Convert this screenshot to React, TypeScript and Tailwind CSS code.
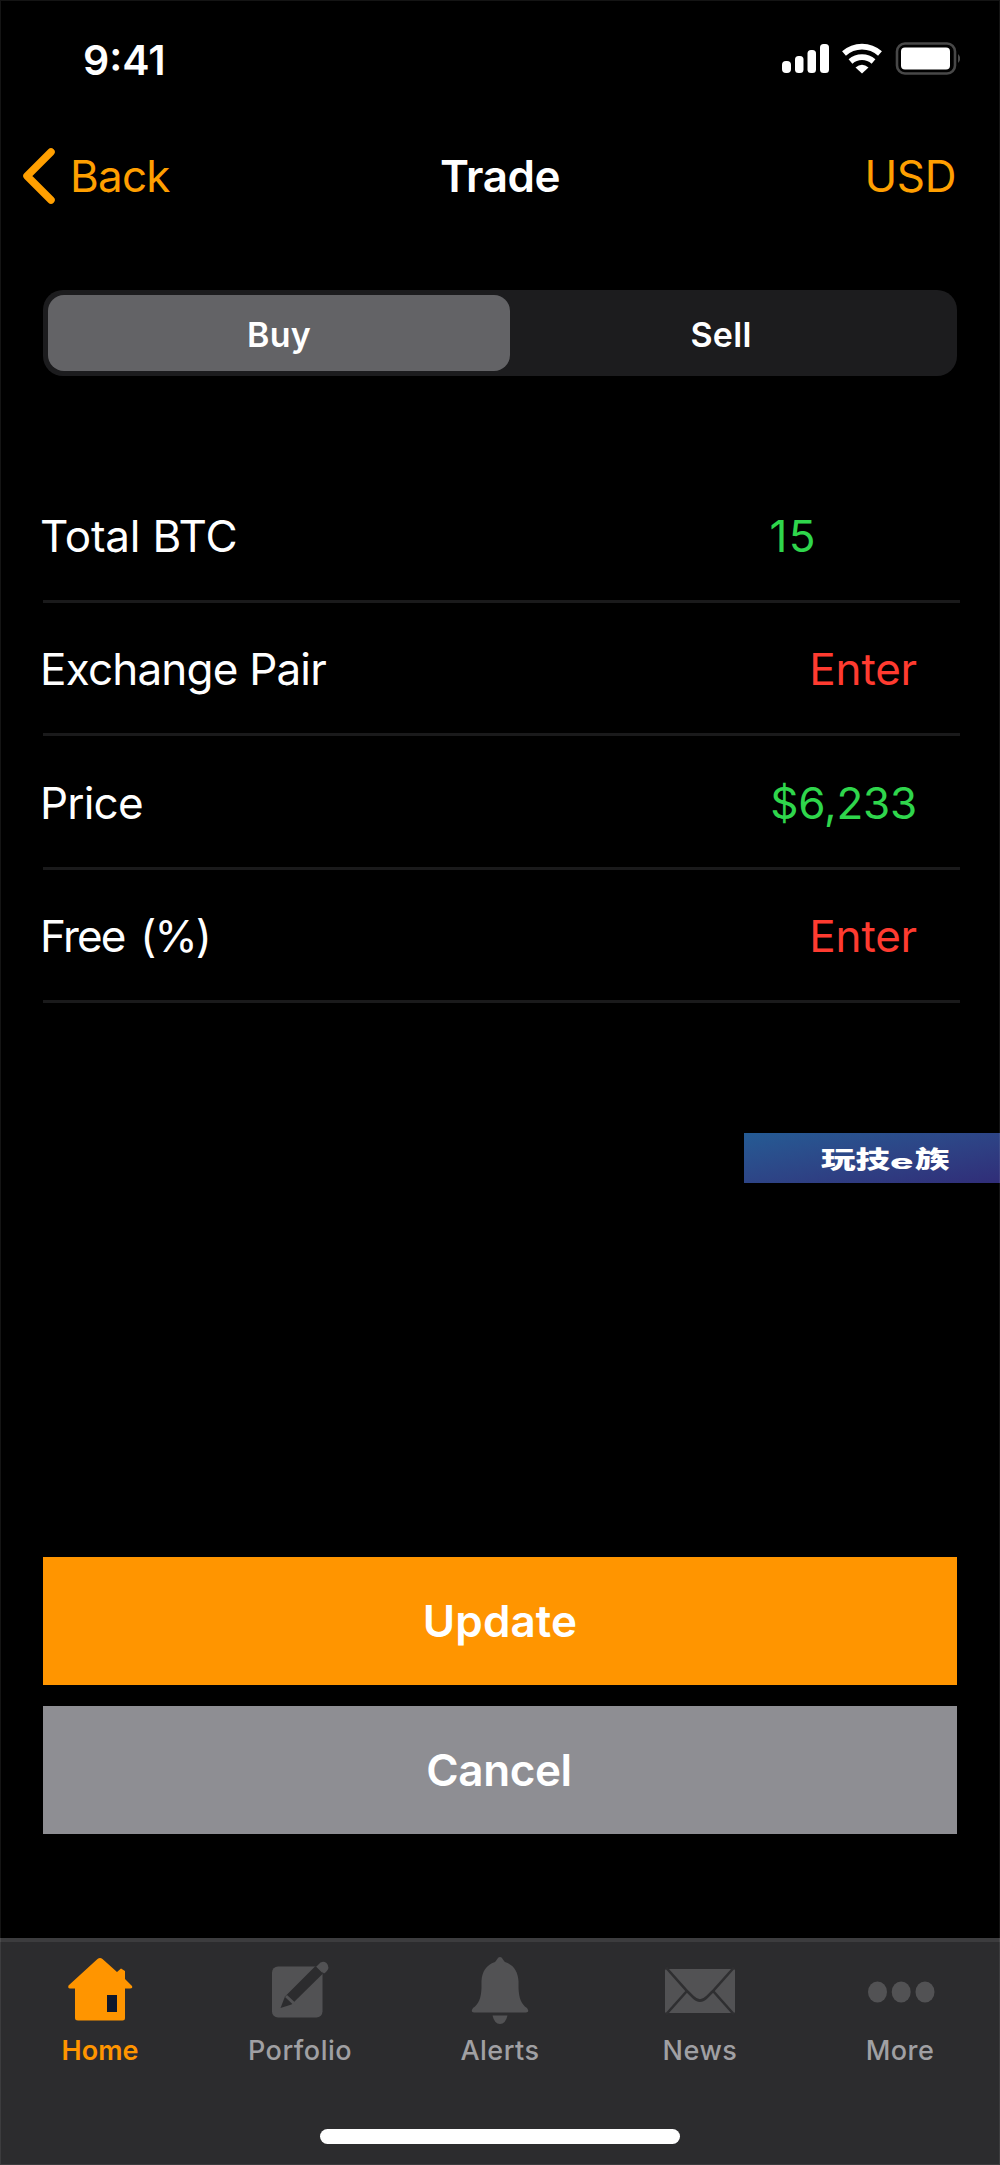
import { useState } from "react";

const rows = [
  { label: "Total BTC", value: "15", labelClass: "tracking-[-0.2px]", valueClass: "text-[#2fd64c] pr-[100px] tracking-[1.4px]" },
  { label: "Exchange Pair", value: "Enter", labelClass: "tracking-[-0.8px]", valueClass: "text-[#ff3b30] tracking-[-0.2px]" },
  { label: "Price", value: "$6,233", labelClass: "tracking-[-0.8px]", valueClass: "text-[#2fd64c] tracking-[-0.2px]" },
  { label: "Free (%)", value: "Enter", labelClass: "tracking-[-1.8px] [word-spacing:5px]", valueClass: "text-[#ff3b30] tracking-[-0.2px]" },
];

function StatusIcons() {
  return (
    <svg width="180" height="36" viewBox="780 41 180 36" fill="white">
      <rect x="782" y="61" width="9" height="12" rx="4" />
      <rect x="795" y="56" width="8.5" height="17" rx="3.5" />
      <rect x="807.5" y="50" width="8.5" height="23" rx="3.5" />
      <rect x="820" y="44" width="9" height="29" rx="3.5" />
      <path d="M844 53.5A27 27 0 0 1 880 53.5" fill="none" stroke="white" strokeWidth="5.8" />
      <path d="M850.5 61.5A17.5 17.5 0 0 1 873.5 61.5" fill="none" stroke="white" strokeWidth="5.8" />
      <path d="M855.5 67.5Q862 62 868.5 67.5L862 73.5Z" />
      <rect x="897" y="43.5" width="58" height="30" rx="8" fill="none" stroke="#484848" strokeWidth="2.6" />
      <rect x="901" y="47.5" width="49" height="22" rx="4" />
      <path d="M958 54Q962.5 58.5 958 63Z" fill="#4a4a4a" />
    </svg>
  );
}

function HomeIcon() {
  return (
    <svg width="80" height="72" viewBox="60 1954 80 72">
      <path
        d="M68.5 1985.5L97.5 1959Q100 1957 102.5 1959L117 1972L121 1968.5L125 1971V1979L132 1986Q133 1988.5 130 1988.5H125V2018Q125 2020.5 122.5 2020.5H78Q75 2020.5 75 2018V1988.5H70Q67.5 1988.5 68.5 1985.5Z"
        fill="#ff9500"
      />
      <rect x="107" y="1995" width="10" height="17" fill="#10182c" />
    </svg>
  );
}

function PortfolioIcon() {
  return (
    <svg width="80" height="72" viewBox="260 1954 80 72">
      <rect x="272" y="1966.5" width="50.5" height="51" rx="6" fill="#525254" />
      <path d="M280.5 2008L285 1996.5L315.5 1966L323 1973.5L291.5 2004.5Z" fill="#2c2c2e" />
      <path d="M286 1996L294 2003.5" stroke="#525254" strokeWidth="3" />
      <path d="M318 1965Q322 1959.5 326.5 1963Q330.5 1967.5 326 1972L324 1973.5L316.5 1966.5Z" fill="#525254" />
    </svg>
  );
}

function BellIcon() {
  return (
    <svg width="80" height="72" viewBox="460 1954 80 72" fill="#525254">
      <path d="M500 1957C502.5 1957 503 1960.5 505 1962C514 1965 518 1972 518.5 1981V1988C519 1998 521 2004 527 2008Q530 2012.5 526 2012.5H474Q470 2012.5 473 2008C479 2004 481 1998 481.5 1988V1981C482 1972 486 1965 495 1962C497 1960.5 497.5 1957 500 1957Z" />
      <path d="M492.5 2015.5H507.5Q505.5 2024 500 2024Q494.5 2024 492.5 2015.5Z" />
    </svg>
  );
}

function MailIcon() {
  return (
    <svg width="80" height="72" viewBox="660 1954 80 72">
      <rect x="665" y="1969" width="70" height="44" rx="1.5" fill="#525254" />
      <g fill="none" stroke="#2f2f31" strokeWidth="2.6">
        <path d="M666 1967.5L687.5 1991.5L693 1997Q700 2004 707 1997L712.5 1991.5L734 1967.5" />
        <path d="M686.5 1991.5L666 2014.5" />
        <path d="M713.5 1991.5L734 2014.5" />
      </g>
    </svg>
  );
}

function MoreIcon() {
  return (
    <svg width="80" height="72" viewBox="860 1954 80 72" fill="#525254">
      <ellipse cx="877.5" cy="1992" rx="9.5" ry="10.5" />
      <ellipse cx="901.2" cy="1992" rx="9.5" ry="10.5" />
      <ellipse cx="925" cy="1992" rx="9.5" ry="10.5" />
    </svg>
  );
}

const navItems = [
  { label: "Home", icon: HomeIcon },
  { label: "Porfolio", icon: PortfolioIcon },
  { label: "Alerts", icon: BellIcon },
  { label: "News", icon: MailIcon },
  { label: "More", icon: MoreIcon },
];

export default function App() {
  const [side, setSide] = useState("Buy");

  return (
    <div className="relative flex h-[2165px] w-[1000px] flex-col overflow-hidden bg-black font-['Inter',sans-serif] text-white">
      <div className="flex h-[120px] shrink-0 items-start justify-between pl-[83px] pr-[40px] pt-[41px]">
        <span className="text-[41px] font-semibold leading-[39px]">9:41</span>
        <StatusIcons />
      </div>

      <header className="grid h-[112px] shrink-0 grid-cols-[1fr_auto_1fr] items-center px-[22px] text-[44px] leading-[56px]">
        <button className="flex items-center gap-[14px] tracking-[-0.8px] text-[#ff9f00]">
          <svg width="34" height="56" viewBox="0 0 34 56" fill="none">
            <path d="M29 4L5 28L29 52" stroke="#ff9f00" strokeWidth="7.5" strokeLinecap="round" strokeLinejoin="round" />
          </svg>
          Back
        </button>
        <h1 className="text-center font-semibold tracking-[-0.5px]">Trade</h1>
        <span className="pr-[22px] text-right tracking-[-0.4px] text-[#ff9f00]">USD</span>
      </header>

      <div className="mx-[43px] mt-[58px] flex h-[86px] shrink-0 rounded-[20px] bg-[#1c1c1e] p-[5px] pr-[25px]">
        {["Buy", "Sell"].map((name) => (
          <button
            key={name}
            onClick={() => setSide(name)}
            className={
              side === name
                ? "w-[462px] rounded-[16px] bg-[#636366] pt-[2px] text-[34px] font-semibold tracking-[0.3px]"
                : "flex-1 rounded-[16px] pt-[2px] text-[34px] font-semibold tracking-[0.3px]"
            }
          >
            {name}
          </button>
        ))}
      </div>

      <div className="ml-[43px] mr-[40px] mt-[93px] shrink-0">
        {rows.map((row) => (
          <div
            key={row.label}
            className="flex h-[133.5px] items-center justify-between border-b-[3px] border-[#1a1a1b] pr-[43px] pt-[3px] text-[44px]"
          >
            <span className={row.labelClass}>
              <span className="-ml-[3px]">{row.label}</span>
            </span>
            <span className={row.valueClass}>{row.value}</span>
          </div>
        ))}
      </div>

      <div className="mt-[130px] flex h-[50px] w-[256px] shrink-0 items-center self-end bg-linear-to-br from-[#245b94] to-[#302d78] pl-[77px] font-['Noto_Sans_CJK_SC',sans-serif] text-[24px] font-black leading-[48px]">
        <span className="w-[69px] origin-left scale-x-[1.44] whitespace-nowrap">玩技</span>
        <span className="w-[25px] origin-left scale-x-[1.95] pt-[7px] font-['Inter',sans-serif] text-[20px] font-extrabold">e</span>
        <span className="w-[34px] origin-left scale-x-[1.44] whitespace-nowrap">族</span>
      </div>

      <div className="mx-[43px] mt-auto flex shrink-0 flex-col gap-[21px] pb-[104px] text-[44px] font-semibold">
        <button className="h-[128px] bg-[#ff9500] tracking-[0.1px]">Update</button>
        <button className="h-[128px] bg-[#8e8e93] pr-[2px] tracking-[-0.4px]">Cancel</button>
      </div>

      <nav className="flex h-[227px] shrink-0 flex-col items-center justify-between border-t-[4px] border-[#3c3c3e] bg-[#2c2c2e] pb-[21px]">
        <div className="grid w-full grid-cols-5 pt-[12px]">
          {navItems.map(({ label, icon: NavIcon }) => (
            <button
              key={label}
              className={
                label === "Home"
                  ? "flex flex-col items-center gap-[5px] text-[27px] font-semibold text-[#ff9500]"
                  : "flex flex-col items-center gap-[5px] text-[27px] font-medium tracking-[0.5px] text-[#a0a0a3]"
              }
            >
              <NavIcon />
              {label}
            </button>
          ))}
        </div>
        <div className="h-[15px] w-[360px] rounded-full bg-white" />
      </nav>

      {/* hairline around the screen */}
      <div className="pointer-events-none absolute inset-0 border border-white/8" />
    </div>
  );
}
